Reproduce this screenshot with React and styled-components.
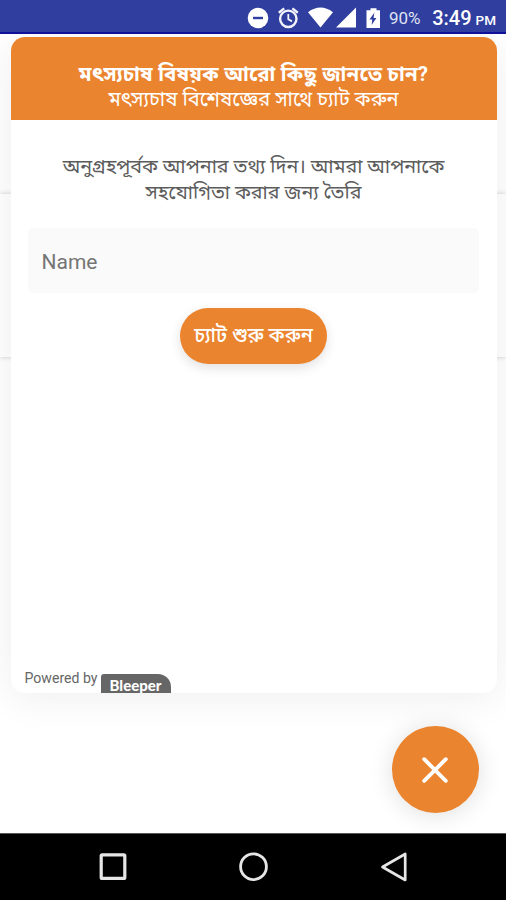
import { useState } from "react";
import styled, { createGlobalStyle } from "styled-components";

function App() {
  const [name, setName] = useState("");

  return (
    <Screen>
      <GlobalStyle />
      <StatusBar>
        <StatusIcons />
        <Battery>90%</Battery>
        <Clock>
          3:49<Meridiem>PM</Meridiem>
        </Clock>
      </StatusBar>
      <Page>
        <Backdrop>
          <BackdropCard />
        </Backdrop>
        <ChatPanel>
          <ChatHeader>
            <Title>মৎস্যচাষ বিষয়ক আরো কিছু জানতে চান?</Title>
            <Subtitle>মৎস্যচাষ বিশেষজ্ঞের সাথে চ্যাট করুন</Subtitle>
          </ChatHeader>
          <ChatBody>
            <Intro>
              অনুগ্রহপূর্বক আপনার তথ্য দিন। আমরা আপনাকে
              <br />
              সহযোগিতা করার জন্য তৈরি
            </Intro>
            <NameInput
              placeholder="Name"
              value={name}
              onChange={(e) => setName(e.target.value)}
            />
            <StartButton>চ্যাট শুরু করুন</StartButton>
          </ChatBody>
          <PoweredBy>
            <PoweredText>Powered by</PoweredText>
            <Badge>Bleeper</Badge>
          </PoweredBy>
        </ChatPanel>
        <CloseButton aria-label="Close">
          <svg width="26" height="26" viewBox="0 0 26 26">
            <path d="M2.2 2.2 23.8 23.8M23.8 2.2 2.2 23.8" stroke="#fff" strokeWidth="3.8" strokeLinecap="round" />
          </svg>
        </CloseButton>
      </Page>
      <NavBar>
        <svg width="28" height="28" viewBox="0 0 28 28">
          <rect x="2.2" y="1.8" width="23.6" height="23.6" rx="1" fill="none" stroke="#e6e6e6" strokeWidth="3.2" />
        </svg>
        <svg width="30" height="30" viewBox="0 0 30 30">
          <circle cx="14.5" cy="14.7" r="12.9" fill="none" stroke="#e6e6e6" strokeWidth="2.8" />
        </svg>
        <svg width="28" height="32" viewBox="0 0 28 32">
          <path d="M2.5 16 25.2 3V29Z" fill="none" stroke="#e6e6e6" strokeWidth="2.7" strokeLinejoin="round" />
        </svg>
      </NavBar>
    </Screen>
  );
}

// Do not disturb, alarm, wifi, signal and charging battery
function StatusIcons() {
  return (
    <IconStrip viewBox="0 0 134 24" width="134" height="24">
      <circle cx="11" cy="12" r="10.3" fill="#fff" />
      <path d="M6 12H16" stroke="#2f3ea0" strokeWidth="2.4" />
      <g fill="none" stroke="#f2f3fa" strokeWidth="2.4">
        <circle cx="41.3" cy="12.8" r="8.2" />
        <path d="M41.3 8V13.3L45 15.4" strokeWidth="1.8" />
        <path d="M31.8 6.7 37.2 2.4M50.8 6.7 45.4 2.4" />
      </g>
      <path d="M61 6.2Q73.5-3 86 6.2L73.5 21.6Z" fill="#fff" />
      <path d="M89 21.6H109V1.6Z" fill="#fff" />
      <path d="M119.5 4.2H123.5V2.2H129.5V4.2H133V22H119.5Z" fill="#fff" />
      <path d="M127.3 6.8 122.5 13.6H125.3L124.6 19 129.4 11.9H126.6Z" fill="#2f3ea0" />
    </IconStrip>
  );
}

export default App;

const GlobalStyle = createGlobalStyle`
  * {
    box-sizing: border-box;
  }

  body {
    margin: 0;
    background: #fff;
    font-family: Roboto, "Noto Sans Bengali", "Noto Sans", sans-serif;
  }
`;

const Screen = styled.div`
  display: flex;
  flex-direction: column;
  width: 506px;
  height: 900px;
  overflow: hidden;
`;

const StatusBar = styled.header`
  display: flex;
  align-items: center;
  height: 34px;
  padding: 3px 10px 0 247px;
  background: #2f3e9f;
  border-bottom: 2px solid #10109a;
  color: #fff;
`;

const IconStrip = styled.svg`
  flex: none;
`;

const Battery = styled.span`
  width: 44px;
  margin-left: 8px;
  font-size: 17px;
  color: #dfe2f3;
  white-space: nowrap;
`;

const Clock = styled.span`
  display: flex;
  align-items: baseline;
  font-size: 20px;
  font-weight: 500;
  white-space: nowrap;
`;

const Meridiem = styled.span`
  margin-left: 4px;
  font-size: 13.5px;
`;

const Page = styled.main`
  position: relative;
  display: flex;
  flex-direction: column;
  height: 799px;
  padding: 3px 9.5px 0 10.5px;
`;

const Backdrop = styled.div`
  position: absolute;
  inset: 0;
  padding-top: 160px;
`;

const BackdropCard = styled.div`
  height: 163px;
  background: #fff;
  box-shadow: 0 0 5px rgba(0, 0, 0, 0.2);
`;

const ChatPanel = styled.section`
  position: relative;
  display: flex;
  flex-direction: column;
  height: 655.5px;
  background: #fff;
  border-radius: 14px;
  box-shadow: 0 5px 40px rgba(0, 0, 0, 0.07);
  clip-path: inset(-3px -10px -80px -11px);
`;

const ChatHeader = styled.div`
  display: flex;
  flex-direction: column;
  align-items: center;
  height: 83px;
  padding-top: 24px;
  background: #eb842e;
  border-radius: 14px 14px 0 0;
  color: #fff;
  white-space: nowrap;
`;

const Title = styled.div`
  font-size: 20.4px;
  font-weight: 700;
  line-height: 26px;
  letter-spacing: 0.25px;
`;

const Subtitle = styled.div`
  font-size: 20px;
  line-height: 25px;
`;

const ChatBody = styled.div`
  display: flex;
  flex: 1;
  flex-direction: column;
  align-items: center;
  padding: 34px 17.5px 0;
`;

const Intro = styled.div`
  height: 74px;
  color: #5c5c5c;
  font-size: 19.7px;
  line-height: 25.5px;
  text-align: center;
  white-space: nowrap;
`;

const NameInput = styled.input`
  width: 100%;
  height: 65px;
  padding: 2px 13.5px 0;
  border: none;
  border-radius: 5px;
  outline: none;
  background: #fafafa;
  color: #444;
  font-family: Roboto, sans-serif;
  font-size: 21px;

  &::placeholder {
    color: #757575;
    opacity: 1;
  }
`;

const StartButton = styled.button`
  width: 147px;
  height: 56px;
  margin-top: 15px;
  padding: 0;
  border: none;
  border-radius: 28px;
  background: #eb842e;
  box-shadow: 0 4px 12px rgba(0, 0, 0, 0.12);
  color: #fff;
  font-family: inherit;
  font-size: 20px;
  font-weight: 500;
  white-space: nowrap;
`;

const PoweredBy = styled.div`
  display: flex;
  height: 24px;
  padding-left: 14px;
  overflow: hidden;
`;

const PoweredText = styled.span`
  width: 76px;
  color: #666;
  font-size: 14.1px;
  line-height: 18px;
  white-space: nowrap;
`;

const Badge = styled.span`
  width: 70px;
  height: 19px;
  margin-top: 5px;
  border-radius: 3px 13px 0 0;
  background: #666;
  color: #fff;
  font-family: Lato, sans-serif;
  font-size: 15px;
  font-weight: 900;
  line-height: 22px;
  text-align: center;
`;

const CloseButton = styled.button`
  display: flex;
  align-items: center;
  justify-content: center;
  align-self: flex-end;
  width: 87px;
  height: 87px;
  margin: 33.5px 18px 0 0;
  padding: 0;
  border: none;
  border-radius: 50%;
  background: #eb842e;
  box-shadow: 0 2px 24px rgba(0, 0, 0, 0.13);
`;

const NavBar = styled.footer`
  display: flex;
  flex: 1;
  align-items: center;
  justify-content: space-between;
  padding: 0 98px 0 99px;
  background: #000;
  border-top: 1px solid #555;
`;
